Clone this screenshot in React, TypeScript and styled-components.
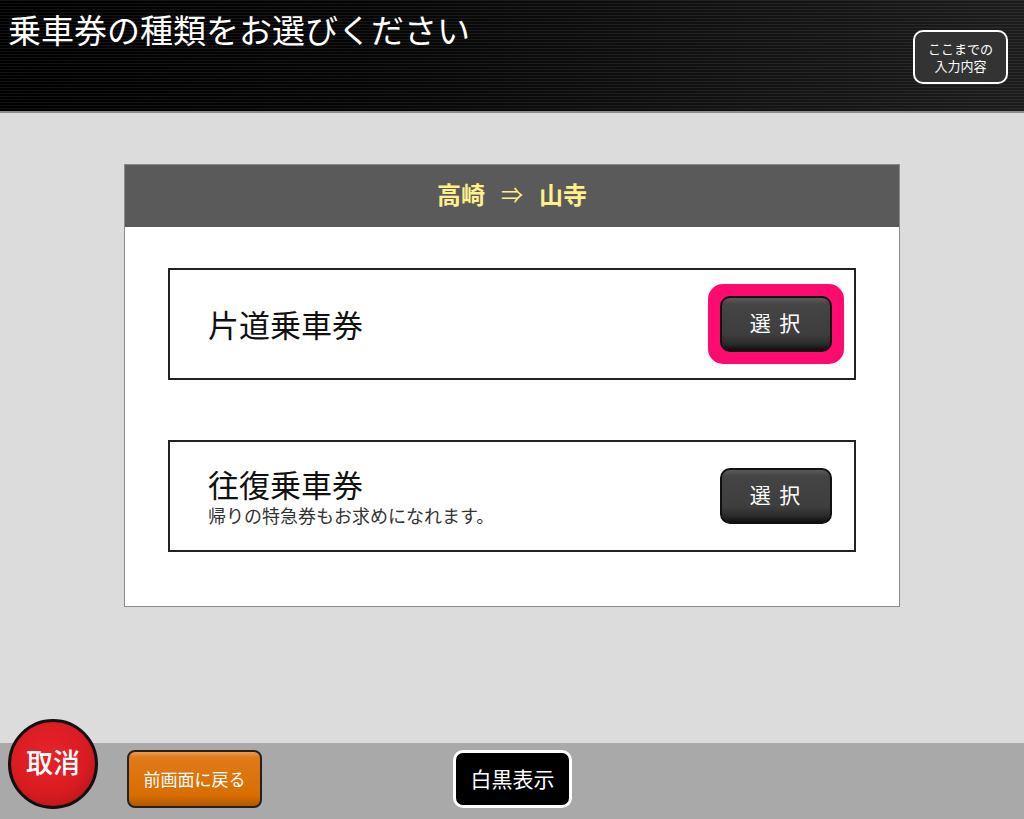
import * as React from 'react'
import styled, { createGlobalStyle } from 'styled-components'

const GlobalStyle = createGlobalStyle`
  html, body {
    margin: 0;
    padding: 0;
    background: #dcdcdc;
  }
  body {
    font-family: "Noto Sans CJK JP", "Noto Sans", sans-serif;
  }
`

const Screen = styled.div`
  width: 1024px;
  height: 819px;
  display: flex;
  flex-direction: column;
  overflow: hidden;
`

const Header = styled.header`
  height: 111px;
  flex-shrink: 0;
  display: flex;
  justify-content: space-between;
  align-items: flex-start;
  border-bottom: 2px solid #8c8c8c;
  background:
    repeating-linear-gradient(
      to bottom,
      rgba(255, 255, 255, 0.07) 0 1px,
      transparent 1px 3px
    ),
    linear-gradient(to right, #000 0%, #050505 35%, #1c1c1c 100%);
`

const Title = styled.h1`
  margin: 6px 0 0 8px;
  font-size: 33px;
  font-weight: 400;
  color: #fff;
  line-height: 46px;
`

const HistoryButton = styled.button`
  margin: 30px 16px 0 0;
  width: 95px;
  height: 54px;
  box-sizing: border-box;
  border: 2px solid #fff;
  border-radius: 10px;
  background: #333;
  color: #fff;
  font-family: inherit;
  font-size: 13px;
  line-height: 17px;
  padding: 0;
`

const Main = styled.main`
  flex: 1;
  display: flex;
  justify-content: center;
  align-items: flex-start;
  padding-top: 51px;
`

const Panel = styled.section`
  width: 776px;
  box-sizing: border-box;
  background: #fff;
  border: 1px solid #8a8a8a;
`

const PanelHead = styled.div`
  height: 62px;
  padding-bottom: 6px;
  box-sizing: border-box;
  background: #5a5a5a;
  color: #fff08c;
  font-size: 24px;
  font-weight: 700;
  display: flex;
  align-items: center;
  justify-content: center;
  gap: 16px;
`

const Arrow = styled.span`
  font-weight: 400;
  font-size: 22px;
`

const PanelBody = styled.div`
  padding: 41px 43px 54px;
  display: flex;
  flex-direction: column;
  gap: 60px;
`

const Card = styled.div`
  height: 112px;
  box-sizing: border-box;
  border: 2px solid #222;
  display: flex;
  align-items: center;
  justify-content: space-between;
  padding: 0 22px 0 38px;
`

const CardText = styled.div`
  display: flex;
  flex-direction: column;
  gap: 2px;
  color: #111;
`

const CardTitle = styled.div`
  font-size: 31px;
  line-height: 36px;
`

const CardNote = styled.div`
  font-size: 18px;
  line-height: 22px;
  color: #333;
`

const Highlight = styled.div<{ $on?: boolean }>`
  padding: 12px;
  margin: -12px;
  border-radius: 15px;
  background: ${(p) => (p.$on ? '#ff0a6e' : 'transparent')};
`

const SelectButton = styled.button`
  display: block;
  width: 112px;
  height: 56px;
  box-sizing: border-box;
  border: 2px solid #111;
  border-radius: 10px;
  background: linear-gradient(to bottom, #5a5a5a 0%, #444 12%, #3e3e3e 70%, #2b2b2b 88%, #111 100%);
  color: #fff;
  font-family: inherit;
  font-size: 21px;
  letter-spacing: 2px;
  padding: 0 0 4px;
`

const Footer = styled.footer`
  height: 76px;
  flex-shrink: 0;
  background: #a9a9a9;
  display: flex;
  align-items: flex-start;
  padding: 7px 0 0 8px;
  box-sizing: border-box;
`

const CancelButton = styled.button`
  width: 90px;
  height: 90px;
  margin-top: -31px;
  border-radius: 50%;
  border: 3px solid #111;
  box-sizing: border-box;
  background: radial-gradient(circle at 45% 40%, #e8232a 0%, #d91c22 55%, #b5141a 85%, #e05a5e 100%);
  color: #fff;
  font-family: inherit;
  font-size: 27px;
  font-weight: 500;
  padding: 0 0 6px;
`

const BackButton = styled.button`
  margin-left: 29px;
  width: 135px;
  height: 58px;
  box-sizing: border-box;
  border: 2px solid #222;
  border-radius: 8px;
  background: linear-gradient(to bottom, #f29a4a 0%, #e07a1a 10%, #d96e00 80%, #b35800 100%);
  color: #fff;
  font-family: inherit;
  font-size: 17px;
  padding: 0 0 2px;
`

const MonoButton = styled.button`
  margin-left: 191px;
  width: 119px;
  height: 58px;
  box-sizing: border-box;
  border: 3px solid #fff;
  border-radius: 10px;
  background: #000;
  color: #fff;
  font-family: inherit;
  font-size: 21px;
  padding: 0 0 3px;
`

const tickets = [
  { name: '片道乗車券', note: '', selected: true },
  { name: '往復乗車券', note: '帰りの特急券もお求めになれます。', selected: false },
]

const App: React.FC = () => (
  <Screen>
    <GlobalStyle />
    <Header>
      <Title>乗車券の種類をお選びください</Title>
      <HistoryButton>
        ここまでの
        <br />
        入力内容
      </HistoryButton>
    </Header>
    <Main>
      <Panel>
        <PanelHead>
          <span>高崎</span>
          <Arrow>⇒</Arrow>
          <span>山寺</span>
        </PanelHead>
        <PanelBody>
          {tickets.map((t) => (
            <Card key={t.name}>
              <CardText>
                <CardTitle>{t.name}</CardTitle>
                {t.note && <CardNote>{t.note}</CardNote>}
              </CardText>
              <Highlight $on={t.selected}>
                <SelectButton>選 択</SelectButton>
              </Highlight>
            </Card>
          ))}
        </PanelBody>
      </Panel>
    </Main>
    <Footer>
      <CancelButton>取消</CancelButton>
      <BackButton>前画面に戻る</BackButton>
      <MonoButton>白黒表示</MonoButton>
    </Footer>
  </Screen>
)

export default App
